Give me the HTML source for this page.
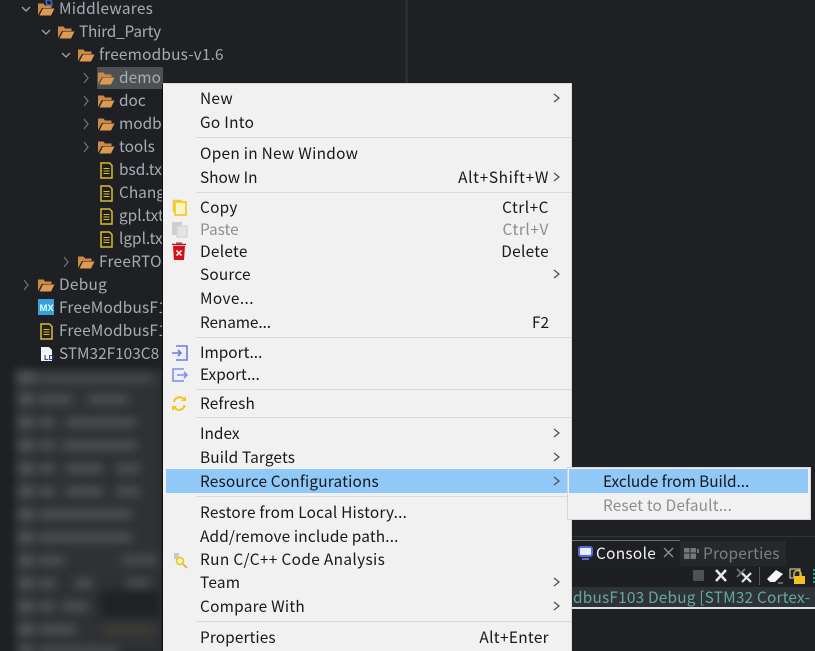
<!DOCTYPE html>
<html><head><meta charset="utf-8"><style>
html,body{margin:0;padding:0;width:815px;height:651px;overflow:hidden;background:#1e2024}
body{position:relative;font-family:"Noto Sans CJK SC","Liberation Sans",sans-serif;font-size:15.4px}
.t,.m,.r{position:absolute;white-space:nowrap;line-height:22px;height:22px;filter:blur(.25px)}
.t{color:#a4adb4}
.m{left:200px;color:#15181c}
.r{color:#15181c;text-align:right;right:266px}
.d{color:#8a8d91}
.ab{position:absolute}
.sep{position:absolute;left:196px;width:375px;height:1px;background:#d8d8d8}
svg{position:absolute;overflow:visible}
.blur{position:absolute;background:#585c60;filter:blur(5px)}
</style></head><body>
<svg width="815" height="651" style="left:0;top:0">
<defs>
<g id="f"><path d="M0 14V2.500h5.500l1.500 2h6.500V7H4L0 14Z" fill="#c98a45"/><path d="M1.500 14.500 5 7.500h11.500l-3.500 7Z" fill="#dd9a50"/></g>
<g id="n"><path d="M1 1h8.500L12 3.500V16H1Z" fill="#1f1f1a" stroke="#dcbc30" stroke-width="1.500"/><path d="M3.500 6.500h6M3.500 9h6M3.500 11.500h6" stroke="#dcbc30" stroke-width="1.100"/></g>
</defs>
<g fill="none" stroke="#a0a4a8" stroke-width="1.300">
<path d="M22 7l4 4 4-4M42 30l4 4 4-4M62 53l4 4 4-4"/>
<g stroke="#6c7074"><path d="M84 73l4 5-4 5M84 96l4 5-4 5M84 119l4 5-4 5M84 142l4 5-4 5M64 257l4 5-4 5M24 280l4 5-4 5"/></g>
</g>
<use href="#f" x="38" y="1"/><path d="M46 0h5l1 5h-5z" fill="none" stroke="#4668c8" stroke-width="1.500"/>
<use href="#f" x="58" y="24"/><use href="#f" x="78" y="47"/>
<rect x="97" y="67" width="66" height="22" fill="#4e5154"/>
<use href="#f" x="98" y="70"/><use href="#f" x="98" y="93"/><use href="#f" x="98" y="116"/><use href="#f" x="98" y="139"/>
<use href="#n" x="100" y="162"/><use href="#n" x="100" y="185"/><use href="#n" x="100" y="208"/><use href="#n" x="100" y="231"/>
<use href="#f" x="78" y="254"/><use href="#f" x="38" y="277"/>
<rect x="38" y="299" width="16" height="16" fill="#39a0dc"/>
<text x="39.500" y="311" font-size="9.500" font-weight="700" fill="#dff" font-family="Liberation Sans">MX</text>
<use href="#n" x="40" y="323"/>
<path d="M41 347h8l3 3v11H41Z" fill="#f2f4f8"/><text x="44" y="360" font-size="7.500" font-weight="700" fill="#24408a" font-family="Liberation Sans">LD</text>
<rect x="405" y="0" width="3" height="84" fill="#2a2d30"/>
</svg>
<div class="t" style="left:59px;top:-3px;letter-spacing:.27px">Middlewares</div>
<div class="t" style="left:79px;top:20px;letter-spacing:-.2px">Third_Party</div>
<div class="t" style="left:99px;top:43px;letter-spacing:.2px">freemodbus-v1.6</div>
<div class="t" style="left:119px;top:66px;letter-spacing:.1px">demo</div>
<div class="t" style="left:119px;top:89px">doc</div>
<div class="t" style="left:119px;top:112px">modbus</div>
<div class="t" style="left:119px;top:135px">tools</div>
<div class="t" style="left:119px;top:158px">bsd.txt</div>
<div class="t" style="left:119px;top:181px">Changes</div>
<div class="t" style="left:119px;top:204px">gpl.txt</div>
<div class="t" style="left:119px;top:227px">lgpl.txt</div>
<div class="t" style="left:99px;top:250px;letter-spacing:.3px">FreeRTOS</div>
<div class="t" style="left:59px;top:273px;letter-spacing:.3px">Debug</div>
<div class="t" style="left:59px;top:296px;letter-spacing:.2px">FreeModbusF103</div>
<div class="t" style="left:59px;top:319px;letter-spacing:.2px">FreeModbusF103</div>
<div class="t" style="left:59px;top:342px">STM32F103C8</div>
<div class="ab" style="left:14px;top:369px;width:150px;height:284px;background:#2f3235;filter:blur(4px)"></div>
<div class="ab" style="left:100px;top:590px;width:60px;height:28px;background:#1f2124;filter:blur(5px)"></div>
<div class="blur" style="left:18px;top:373px;width:18px;height:10px;"></div><div class="blur" style="left:38px;top:376px;width:115px;height:5px;"></div>
<div class="blur" style="left:20px;top:394px;width:13px;height:11px"></div><div class="blur" style="left:38px;top:396px;width:34px;height:7px"></div><div class="blur" style="left:88px;top:396px;width:40px;height:7px"></div>
<div class="blur" style="left:20px;top:417px;width:13px;height:11px"></div><div class="blur" style="left:38px;top:419px;width:17px;height:7px"></div><div class="blur" style="left:66px;top:419px;width:70px;height:7px"></div>
<div class="blur" style="left:20px;top:440px;width:13px;height:11px"></div><div class="blur" style="left:38px;top:442px;width:17px;height:7px"></div><div class="blur" style="left:62px;top:442px;width:75px;height:7px"></div>
<div class="blur" style="left:20px;top:463px;width:13px;height:11px"></div><div class="blur" style="left:38px;top:465px;width:17px;height:7px"></div><div class="blur" style="left:66px;top:465px;width:37px;height:7px"></div><div class="blur" style="left:116px;top:465px;width:24px;height:7px"></div>
<div class="blur" style="left:20px;top:486px;width:13px;height:11px"></div><div class="blur" style="left:38px;top:488px;width:17px;height:7px"></div><div class="blur" style="left:66px;top:488px;width:37px;height:7px"></div><div class="blur" style="left:116px;top:488px;width:24px;height:7px"></div>
<div class="blur" style="left:20px;top:509px;width:13px;height:11px"></div><div class="blur" style="left:38px;top:511px;width:94px;height:7px"></div>
<div class="blur" style="left:20px;top:532px;width:13px;height:11px"></div><div class="blur" style="left:38px;top:534px;width:94px;height:7px"></div>
<div class="blur" style="left:20px;top:555px;width:13px;height:11px"></div><div class="blur" style="left:38px;top:557px;width:26px;height:7px"></div><div class="blur" style="left:122px;top:557px;width:36px;height:6px"></div>
<div class="blur" style="left:20px;top:578px;width:13px;height:11px"></div><div class="blur" style="left:38px;top:580px;width:17px;height:7px"></div><div class="blur" style="left:75px;top:580px;width:18px;height:7px"></div><div class="blur" style="left:126px;top:580px;width:24px;height:6px"></div>
<div class="blur" style="left:20px;top:601px;width:13px;height:11px"></div><div class="blur" style="left:38px;top:603px;width:17px;height:7px"></div><div class="blur" style="left:62px;top:603px;width:26px;height:7px"></div>
<div class="blur" style="left:20px;top:624px;width:13px;height:11px"></div><div class="blur" style="left:38px;top:626px;width:38px;height:7px"></div><div class="blur" style="left:104px;top:626px;width:50px;height:7px;background:#4a4230"></div>
<div class="blur" style="left:20px;top:646px;width:13px;height:9px"></div><div class="blur" style="left:38px;top:648px;width:80px;height:6px"></div>
<div class="ab" style="left:572px;top:536px;width:243px;height:1px;background:#303337"></div>
<div class="ab" style="left:572px;top:540px;width:108px;height:26px;background:#1e2024;border-top:1px solid #6a6e72;box-sizing:border-box"></div>
<div class="ab" style="left:680px;top:541px;width:106px;height:25px;background:#26292c"></div>
<div class="ab" style="left:572px;top:566px;width:243px;height:21px;background:#1d1f22"></div>
<div class="ab" style="left:572px;top:587px;width:243px;height:20px;background:#2d3336"></div>
<div class="ab" style="left:572px;top:607px;width:243px;height:2px;background:#e0e0e0"></div>
<div class="ab" style="left:596px;top:542px;color:#f2f2f2;line-height:22px;white-space:nowrap;letter-spacing:.3px">Console</div>
<div class="ab" style="left:703px;top:542px;color:#7c8084;line-height:22px;white-space:nowrap;letter-spacing:.2px">Properties</div>
<div class="ab" style="left:572px;top:586px;width:243px;height:22px;overflow:hidden;color:#67a89b;line-height:22px;white-space:nowrap"><span style="position:absolute;left:1px;letter-spacing:.2px">dbusF103 Debug [STM32 Cortex-</span></div>
<svg width="815" height="651" style="left:0;top:0">
<rect x="579" y="547" width="13" height="9" rx="2" fill="#e8ecf8" stroke="#5a68d8" stroke-width="2"/><path d="M582 558h7v2h-7z" fill="#5a68d8"/>
<path d="M664 548l9 9m0-9l-9 9" stroke="#8e9194" stroke-width="1.400" fill="none"/>
<rect x="684" y="548" width="12" height="11" rx="1" fill="#73777b"/><path d="M684 553h12M690 548v11" stroke="#26292c"/><rect x="697" y="549" width="2" height="4" fill="#73777b"/>
<rect x="693" y="570" width="11" height="11" fill="#4f5255"/>
<path d="M716 570l10 11m0-11l-10 11" stroke="#e8e8e8" stroke-width="2.500"/>
<path d="M737 569l8 8m0-8l-8 8" stroke="#777" stroke-width="1.600"/><path d="M742 573l9 9m0-9l-9 9" stroke="#e8e8e8" stroke-width="2.200"/>
<rect x="759" y="567" width="1" height="18" fill="#53575a"/>
<path d="M767 579l9-9 7 4-8 8h-5Z" fill="#f6f6f6"/><path d="M778 583h5" stroke="#aaa"/>
<rect x="790" y="569" width="10" height="9" fill="#22262a" stroke="#ddd"/>
<path d="M794 577v-3a3 3 0 0 1 7 0v3" stroke="#e0b820" fill="none" stroke-width="1.500"/><rect x="794" y="576" width="11" height="8" fill="#f4c020"/>
<path d="M813 570h2M813 574h2M813 578h2M813 582h2" stroke="#20d0b0" stroke-width="1.500"/>
</svg>
<div class="ab" style="left:162px;top:84px;width:1px;height:567px;background:#0c0d0e"></div>
<div class="ab" style="left:163px;top:83px;width:409px;height:568px;background:#f1f1f1;box-sizing:border-box;border-top:1px solid #dcdcdc;border-right:1px solid #d9d9d9"></div>
<div class="sep" style="top:137px"></div><div class="sep" style="top:192px"></div><div class="sep" style="top:337px"></div>
<div class="sep" style="top:389px"></div><div class="sep" style="top:417px"></div><div class="sep" style="top:496px"></div><div class="sep" style="top:621px"></div>
<div class="ab" style="left:166px;top:469px;width:402px;height:24px;background:#90c8f7"></div>
<div class="m" style="top:87px;letter-spacing:.3px">New</div>
<div class="m" style="top:111px;letter-spacing:.3px">Go Into</div>
<div class="m" style="top:142px;letter-spacing:.28px">Open in New Window</div>
<div class="m" style="top:166px">Show In</div><div class="r" style="top:166px;letter-spacing:.65px">Alt+Shift+W</div>
<div class="m" style="top:196px;letter-spacing:.25px">Copy</div><div class="r" style="top:196px;letter-spacing:.5px">Ctrl+C</div>
<div class="m d" style="top:218px">Paste</div><div class="r d" style="top:218px;letter-spacing:.6px">Ctrl+V</div>
<div class="m" style="top:240px;letter-spacing:.3px">Delete</div><div class="r" style="top:240px;letter-spacing:.3px">Delete</div>
<div class="m" style="top:263px;letter-spacing:.17px">Source</div>
<div class="m" style="top:287px;letter-spacing:.4px">Move...</div>
<div class="m" style="top:311px;letter-spacing:-.1px">Rename...</div><div class="r" style="top:311px">F2</div>
<div class="m" style="top:341px">Import...</div>
<div class="m" style="top:363px">Export...</div>
<div class="m" style="top:392px;letter-spacing:.14px">Refresh</div>
<div class="m" style="top:422px">Index</div>
<div class="m" style="top:446px;letter-spacing:.15px">Build Targets</div>
<div class="m" style="top:470px;letter-spacing:.17px">Resource Configurations</div>
<div class="m" style="top:501px;letter-spacing:.21px">Restore from Local History...</div>
<div class="m" style="top:525px;letter-spacing:.15px">Add/remove include path...</div>
<div class="m" style="top:548px;letter-spacing:.35px">Run C/C++ Code Analysis</div>
<div class="m" style="top:571px;letter-spacing:.25px">Team</div>
<div class="m" style="top:595px;letter-spacing:.25px">Compare With</div>
<div class="m" style="top:626px;letter-spacing:.1px">Properties</div><div class="r" style="top:626px;letter-spacing:.33px">Alt+Enter</div>
<div class="ab" style="left:567px;top:467px;width:244px;height:53px;background:#f1f1f1;box-sizing:border-box;border:1px solid #d4d4d4"></div>
<div class="ab" style="left:569px;top:469px;width:239px;height:24px;background:#90c8f7"></div>
<div class="m" style="left:603px;top:470px;letter-spacing:-.05px">Exclude from Build...</div>
<div class="m d" style="left:603px;top:494px;letter-spacing:.15px">Reset to Default...</div>
<svg width="815" height="651" style="left:0;top:0">
<g fill="none" stroke="#4a4c50" stroke-width="1.200">
<path d="M554 94l5 4-5 4M554 173l5 4-5 4M554 270l5 4-5 4M554 429l5 4-5 4M554 453l5 4-5 4M554 477l5 4-5 4M554 578l5 4-5 4M554 602l5 4-5 4"/>
</g>
<path d="M173.500 212V200.500H182" fill="none" stroke="#f0c830" stroke-width="1.500"/>
<rect x="175" y="202" width="11" height="13" fill="#fbf3c8" stroke="#f2cc30" stroke-width="1.800"/>
<rect x="172" y="222" width="10" height="13" fill="#cfcfcf"/><rect x="177" y="226" width="10" height="11" fill="#e4e4e4" stroke="#cfcfcf"/>
<path d="M173 246h12l-1 14h-10Z" fill="#d4101c"/><path d="M172 244.500h14" stroke="#a81820" stroke-width="1.500"/><path d="M176 243h6" stroke="#a81820"/>
<path d="M176.500 250.500l5 5m0-5l-5 5" stroke="#fff" stroke-width="1.500"/>
<path d="M176 346h11v14h-11" fill="#eef0fc" stroke="#6a7ee0" stroke-width="1.600"/><path d="M172 353h9m-3-3 3 3-3 3" fill="none" stroke="#6a7ee0" stroke-width="1.600"/>
<path d="M184 369h-11v12h11" fill="#eef0fc" stroke="#7f90e4" stroke-width="1.600"/><path d="M177 375h10m-3-3 3 3-3 3" fill="none" stroke="#7f90e4" stroke-width="1.600"/>
<path d="M174 402a5.500 5.500 0 0 1 10-2.500M184.500 405a5.500 5.500 0 0 1-10 2.500" fill="none" stroke="#f8c420" stroke-width="2.200"/>
<path d="M186 396v5h-5zM172 411v-5h5z" fill="#f8c420"/>
<rect x="174" y="553" width="5" height="6" fill="#c8c8c8"/>
<circle cx="180" cy="561" r="3.500" fill="#fdf3b0" stroke="#e8c030" stroke-width="1.600"/><path d="M183 564l4 4" stroke="#e0b040" stroke-width="1.800"/>
</svg>
</body></html>
